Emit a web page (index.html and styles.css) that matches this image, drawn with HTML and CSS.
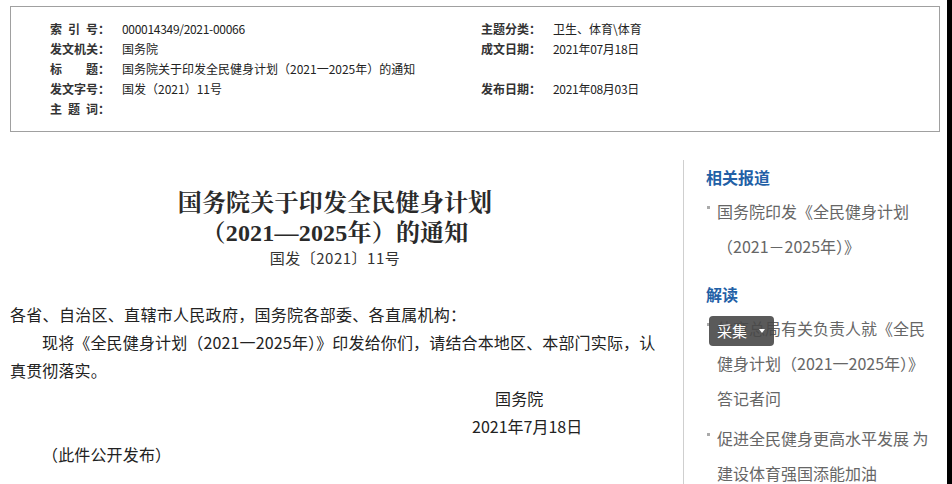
FILE: index.html
```html
<!DOCTYPE html>
<html lang="zh-CN">
<head>
<meta charset="utf-8">
<title>国务院关于印发全民健身计划（2021—2025年）的通知</title>
<link rel="stylesheet" href="styles.css">
</head>
<body>
<div class="page">
  <div class="meta">
    <div class="meta-grid">
      <div class="row"><span class="lab"><span class="lab-t">索引号</span>：</span><span class="val num">000014349/2021-00066</span></div>
      <div class="row"><span class="lab">主题分类：</span><span class="val">卫生、体育\体育</span></div>
      <div class="row"><span class="lab"><span class="lab-t">发文机关</span>：</span><span class="val">国务院</span></div>
      <div class="row"><span class="lab">成文日期：</span><span class="val num">2021年07月18日</span></div>
      <div class="row"><span class="lab"><span class="lab-t">标题</span>：</span><span class="val">国务院关于印发全民健身计划（2021一2025年）的通知</span></div>
      <div class="row"></div>
      <div class="row"><span class="lab"><span class="lab-t">发文字号</span>：</span><span class="val">国发（2021）11号</span></div>
      <div class="row"><span class="lab">发布日期：</span><span class="val num">2021年08月03日</span></div>
      <div class="row"><span class="lab"><span class="lab-t">主题词</span>：</span><span class="val"></span></div>
      <div class="row"></div>
    </div>
  </div>

  <div class="main">
    <div class="content">
      <h1 class="title">国务院关于印发全民健身计划<br>（2021—2025年）的通知</h1>
      <div class="docno">国发〔2021〕11号</div>
      <div class="body">
        <p class="p wide">各省、自治区、直辖市人民政府，国务院各部委、各直属机构：</p>
        <p class="p indent">现将《全民健身计划（2021一2025年）》印发给你们，请结合本地区、本部门实际，认真贯彻落实。</p>
        <p class="p sign">国务院</p>
        <p class="p date">2021年7月18日</p>
        <p class="p indent">（此件公开发布）</p>
      </div>
    </div>

    <div class="sidebar">
      <h2 class="side-h">相关报道</h2>
      <ul class="list">
        <li class="item">国务院印发《全民健身计划（2021－2025年）》</li>
      </ul>
      <h2 class="side-h second">解读</h2>
      <ul class="list">
        <li class="item">体育总局有关负责人就《全民健身计划（2021一2025年）》答记者问</li>
        <li class="item">促进全民健身更高水平发展 为建设体育强国添能加油</li>
      </ul>
      <div class="collect">采集<span class="caret"></span></div>
    </div>
  </div>
</div>
</body>
</html>
```

FILE: styles.css
```css
html, body {
  margin: 0;
  padding: 0;
  background: #fff;
}

body {
  font-family: "Noto Sans CJK SC", "Liberation Sans", sans-serif;
  color: #222;
}

.page {
  width: 952px;
  height: 484px;
  overflow: hidden;
  box-sizing: border-box;
  border-right: 5px solid #000;
  padding-top: 6px;
}

/* ---------- meta box ---------- */
.meta {
  margin-left: 10px;
  width: 930px;
  height: 126px;
  box-sizing: border-box;
  border: 1px solid #a0a0a0;
  padding: 12px 0 0 39px;
}

.meta-grid {
  display: grid;
  grid-template-columns: 431px 1fr;
  grid-auto-rows: 20px;
}

.row {
  display: flex;
  align-items: center;
  font-size: 12px;
  line-height: 20px;
  white-space: nowrap;
}

.lab {
  font-weight: 700;
  color: #333;
  width: 72px;
  flex: none;
}

.lab-t {
  display: inline-block;
  width: 48px;
  text-align: justify;
  text-align-last: justify;
  vertical-align: top;
}

.val {
  color: #222;
  font-size: 12px;
}

.num {
  letter-spacing: -0.3px;
}

/* ---------- main ---------- */
.main {
  display: flex;
  margin-top: 28px;
}

.content {
  width: 650px;
  padding-left: 10px;
  flex: none;
}

.title {
  margin: 0;
  padding-top: 28px;
  text-align: center;
  font-family: "Liberation Serif", "Noto Serif CJK SC", "Noto Sans CJK SC", serif;
  font-size: 24px;
  line-height: 30px;
  font-weight: 700;
  color: #2a2a2a;
  letter-spacing: 0.2px;
}

.docno {
  text-align: center;
  font-size: 15px;
  line-height: 20px;
  color: #333;
  letter-spacing: 0.5px;
}

.body {
  margin-top: 32px;
}

.p {
  margin: 0;
  font-size: 16px;
  line-height: 28px;
  color: #222;
  letter-spacing: 0.15px;
}

.wide {
  letter-spacing: 0.3px;
}

.indent {
  text-indent: 32px;
}

.sign {
  padding-left: 485px;
}

.date {
  padding-left: 462px;
  letter-spacing: 0;
}

/* ---------- sidebar ---------- */
.sidebar {
  position: relative;
  margin-left: 23px;
  border-left: 1px solid #cfcfcf;
  padding-left: 22px;
  width: 226px;
  min-height: 400px;
  flex: none;
}

.side-h {
  margin: 5px 0 0;
  font-size: 16px;
  line-height: 24px;
  font-weight: 700;
  color: #2260a6;
}

.side-h.second {
  margin-top: 18px;
}

.list {
  list-style: none;
  margin: 0;
  padding: 0;
}

.item {
  position: relative;
  padding-left: 11px;
  margin-top: 5px;
  font-size: 16px;
  line-height: 35px;
  color: #666;
}

.item::before {
  content: "";
  position: absolute;
  left: 1px;
  top: 12px;
  width: 3px;
  height: 3px;
  background: #aaa;
}

.collect {
  position: absolute;
  left: 25px;
  top: 156px;
  width: 65px;
  height: 30px;
  box-sizing: border-box;
  padding-left: 8px;
  border-radius: 4px;
  background: rgba(72, 72, 72, 0.9);
  color: #fff;
  font-size: 15px;
  line-height: 30px;
}

.caret {
  position: absolute;
  left: 50px;
  top: 13px;
  width: 0;
  height: 0;
  border-left: 3px solid transparent;
  border-right: 3px solid transparent;
  border-top: 4px solid #fff;
}
```
